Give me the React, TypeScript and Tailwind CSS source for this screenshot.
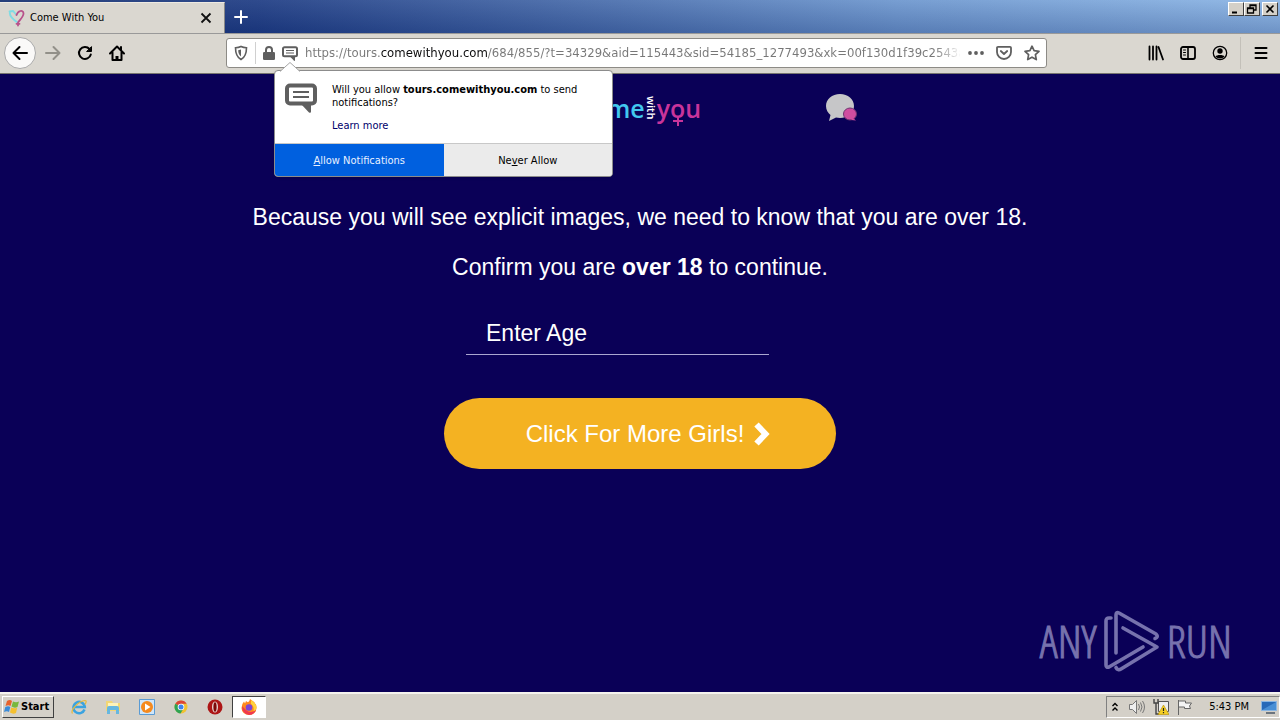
import React from "react";

const ui = "font-['DejaVu_Sans_Condensed','Noto_Sans',sans-serif]";

function NoticeIcon({ className }: { className: string }) {
  return (
    <svg viewBox="0 0 32 30" className={className} fill="none">
      <path d="M5 2.500h22a3 3 0 0 1 3 3v12a3 3 0 0 1-3 3H5a3 3 0 0 1-3-3v-12a3 3 0 0 1 3-3z" stroke="#5f5f5f" strokeWidth="4" strokeLinejoin="round" />
      <path d="M15.500 20.500 24 29.500q2 1 2-1v-8z" fill="#5f5f5f" />
      <path d="M8 9h16M8 14h16" stroke="#5f5f5f" strokeWidth="2.200" />
    </svg>
  );
}

function HeartIcon() {
  return (
    <svg viewBox="0 0 18 18" className="h-[18px] w-[18px]" fill="none" strokeLinecap="round" strokeWidth="1.800">
      <path d="M9.500 13.500C5 10.500 1 6 2 3M1.500 2.500 5 2l3.500 4" stroke="#7fdce4" />
      <path d="M8.500 6C10 1.500 15 .5 15.500 4c.5 3-2.500 5.500-5.500 9.500v3M8.500 14.800h3" stroke="#b8518b" />
    </svg>
  );
}

function WinButton({ label, children }: { label: string; children: React.ReactNode }) {
  return (
    <button aria-label={label} className="flex h-[14px] w-4 items-center justify-center border border-t-white border-l-white border-r-[#404040] border-b-[#404040] bg-[#d4d0c8]">
      <svg viewBox="0 0 12 10" className="h-[10px] w-3" fill="none" stroke="#000">{children}</svg>
    </button>
  );
}

function TitleBar() {
  return (
    <header className="flex h-[33px] bg-[linear-gradient(180deg,rgba(255,255,255,0.08),rgba(10,30,90,0.22)),linear-gradient(90deg,#15306f_0%,#1d3b83_20%,#6c96ce_70%,#8ab4e4_100%)]">
      <div className="flex h-[31px] w-[225px] items-center self-end border-t border-r border-t-[#eeeae2] border-r-[#888] bg-[#dad7d0] pr-2.5 pl-2">
        <HeartIcon />
        <span className="ml-1 flex-1 text-[11px] leading-4 text-black">Come With You</span>
        <button aria-label="Close tab" className="flex h-4 w-4 items-center justify-center">
          <svg viewBox="0 0 12 12" className="h-3 w-3" stroke="#111" strokeWidth="1.800"><path d="M1.500 1.500l9 9M10.500 1.500l-9 9" /></svg>
        </button>
      </div>
      <button aria-label="New tab" className="flex w-8 items-center justify-center">
        <svg viewBox="0 0 14 14" className="h-[14px] w-[14px]" stroke="#fff" strokeWidth="2" strokeLinecap="round"><path d="M7 1v12M1 7h12" /></svg>
      </button>
      <div className="ml-auto flex pt-0.5 pr-0.5">
        <WinButton label="Minimize"><path d="M2 8.500h5" strokeWidth="2" /></WinButton>
        <WinButton label="Restore"><path d="M4 3.500V1h6v5H8M4 1.500h6M1.500 4h6v5h-6zM1.500 4.500h6" strokeWidth="1.300" /></WinButton>
        <span className="w-0.5" />
        <WinButton label="Close"><path d="M2.500 1.500l7 7M9.500 1.500l-7 7" strokeWidth="1.600" /></WinButton>
      </div>
    </header>
  );
}

function Popup() {
  return (
    <section className="absolute top-[31px] left-[47px] z-10 w-[339px] rounded-[4px] border border-[#8c8c8c] bg-white text-[11px] leading-[13px] text-black shadow-sm">
      <svg viewBox="0 0 20 10" className="absolute -top-[9px] left-[5px] h-[10px] w-5"><path d="M0 9.500 10 .5l10 9" fill="#fff" stroke="#a5a5a5" /><path d="M1 9.800h18" stroke="#fff" strokeWidth="1.500" /></svg>
      <div className="flex h-[72px] gap-[15px] pt-3 pr-4 pl-2.5">
        <NoticeIcon className="h-[30px] w-8 shrink-0" />
        <div>
          <p>Will you allow <b>tours.comewithyou.com</b> to send notifications?</p>
          <a href="#learn" className="mt-2.5 block text-[#00006b]">Learn more</a>
        </div>
      </div>
      <div className="grid grid-cols-2 overflow-hidden rounded-b-[3px] border-t border-[#c8c8c8]">
        <button className="h-8 bg-[#0060df] text-[#e8f0ff]"><u>A</u>llow Notifications</button>
        <button className="h-8 bg-[#ebebeb]">Ne<u>v</u>er Allow</button>
      </div>
    </section>
  );
}

function ToolButton({ label, className, children }: { label: string; className?: string; children: React.ReactNode }) {
  return (
    <button aria-label={label} className={`flex h-8 w-8 shrink-0 items-center justify-center ${className ?? ""}`}>
      <svg viewBox="0 0 16 16" className="h-4 w-4" fill="none" stroke="currentColor" strokeWidth="2" strokeLinecap="round" strokeLinejoin="round">{children}</svg>
    </button>
  );
}

function NavBar() {
  return (
    <nav className="flex h-[41px] items-center border-t border-b border-t-[#999] border-b-[#77756f] bg-[#dad7d0] pb-px text-black">
      <div className="flex w-[226px] shrink-0 items-center pl-1">
        <ToolButton label="Back" className="rounded-full border border-[#aaa] bg-[#faf9f8]"><path d="M15 8H1.500M7.500 2 1.500 8l6 6" /></ToolButton>
        <ToolButton label="Forward" className="ml-px text-[#929089]"><path d="M1 8h13.500M8.500 2l6 6-6 6" /></ToolButton>
        <ToolButton label="Reload"><path d="M13.800 9.500A6 6 0 1 1 12.500 4" /><path d="M10 6.500h4.500V2z" fill="currentColor" strokeWidth="1" /></ToolButton>
        <ToolButton label="Home"><path d="M1 8.500 8 1.500l7 7M3.500 7.500V15h9V7.500" /><path d="M8 15v-4" strokeWidth="3" strokeLinecap="butt" /><path d="M12 2v3" /></ToolButton>
      </div>
      <div className="relative flex h-[30px] max-w-[821px] flex-1 items-center rounded-[3px] border border-[#8d8b86] bg-white pl-1.5 text-[#5f5f5f]">
        <svg viewBox="0 0 16 16" className="h-4 w-4" fill="none" stroke="currentColor" strokeWidth="1.600"><path d="M8 1.500c2 1 4 1.200 5.500 1.200C13.500 8 12.500 12 8 14.500 3.500 12 2.500 8 2.500 2.700 4 2.700 6 2.500 8 1.500z" /><path d="M8 4.500v7C6 10 5.300 8 5.200 5.300z" fill="currentColor" stroke="none" /></svg>
        <span className="mx-1.5 h-[22px] w-px bg-[#d0d0d0]" />
        <svg viewBox="0 0 14 16" className="h-4 w-[14px]" fill="#5f5f5f"><rect x="1" y="7" width="12" height="8" rx="1.300" /><path d="M4 8V5a3 3 0 0 1 6 0v3" fill="none" stroke="#5f5f5f" strokeWidth="2" /></svg>
        <NoticeIcon className="ml-1.5 h-[15px] w-4" />
        <input aria-label="Address" readOnly defaultValue="https://tours.comewithyou.com/684/855/?t=34329&aid=115443&sid=54185_1277493&xk=00f130d1f39c2543a8d6a1" className="ml-[7px] min-w-0 flex-1 bg-[linear-gradient(90deg,#777_75px,#0c0c0d_75px,#0c0c0d_182px,#777_182px,#777_630px,transparent_656px)] bg-clip-text text-[13px] leading-5 text-transparent outline-none" />
        <div className="ml-2 flex items-center gap-3 pr-1.5">
          <button aria-label="Page actions"><svg viewBox="0 0 16 16" className="h-4 w-4" fill="currentColor"><circle cx="2" cy="8" r="1.900" /><circle cx="8" cy="8" r="1.900" /><circle cx="14" cy="8" r="1.900" /></svg></button>
          <button aria-label="Save to Pocket"><svg viewBox="0 0 16 16" className="h-4 w-4" fill="none" stroke="currentColor" strokeWidth="1.800" strokeLinecap="round" strokeLinejoin="round"><path d="M2 1.800h12a1 1 0 0 1 1 1V7A7 7 0 0 1 1 7V2.800a1 1 0 0 1 1-1z" /><path d="M4.800 6 8 9l3.200-3" /></svg></button>
          <button aria-label="Bookmark"><svg viewBox="0 0 16 16" className="h-4 w-4" fill="none" stroke="currentColor" strokeWidth="1.700" strokeLinejoin="round"><path d="M8 1.200l2.100 4.500 4.900.6-3.600 3.400.9 4.900L8 12.200l-4.300 2.400.9-4.900L1 6.300l4.900-.6z" /></svg></button>
        </div>
        <Popup />
      </div>
      <div className="ml-auto flex items-center pr-[3px]">
        <ToolButton label="Library"><path d="M1.500 1.500v13M5 1.500v13M8.500 1.500v13M10.500 2l4.500 12.500" strokeWidth="1.800" /></ToolButton>
        <ToolButton label="Sidebars"><rect x="1" y="2" width="14" height="12" rx="2" strokeWidth="1.800" /><path d="M8 2v12" strokeWidth="1.600" /><path d="M3.500 5h2M3.500 7.500h2M3.500 10h2" strokeWidth="1" /></ToolButton>
        <ToolButton label="Account"><circle cx="8" cy="8" r="6.700" strokeWidth="1.300" /><circle cx="8" cy="6" r="2.700" fill="currentColor" stroke="none" /><path d="M3.500 11.500c1-2 8-2 9 0-2 2.600-7 2.600-9 0z" fill="currentColor" stroke="none" /></ToolButton>
        <span className="mx-1 h-8 w-px bg-[#c3c0b9]" />
        <ToolButton label="Menu"><path d="M2.500 3h11M2.500 8h11M2.500 13h11" /></ToolButton>
      </div>
    </nav>
  );
}

function Watermark() {
  return (
    <div className="absolute right-12 bottom-5 flex items-center gap-1.5 font-['Open_Sans_Condensed_Light','Open_Sans_Condensed','Roboto_Condensed',sans-serif] text-[45px] leading-[62px] font-light text-[#7772ad] [-webkit-text-stroke:1px_#7772ad]">
      <span>ANY</span>
      <svg viewBox="0 0 56 62" className="mx-px h-[62px] w-14" fill="none" stroke="currentColor" strokeWidth="3.600" strokeLinejoin="round" strokeLinecap="round">
        <path d="M12 43V5q0-3.500 3-2L52 24q3 3-1 4.500" />
        <path d="M7 8H5Q2 8 2 11v44q0 3 3 2L39 37" />
        <path d="M19 18 53 37 17 59q-3 2-5-1.500" />
      </svg>
      <span>RUN</span>
    </div>
  );
}

function Page() {
  return (
    <main className="relative flex-1 bg-[#0a0057] px-4 pt-3.5 font-['Liberation_Sans',Arial,sans-serif] text-white">
      <div className="mx-auto grid w-[434px] grid-cols-[1fr_auto_1fr] items-center">
        <span />
        <div className="flex h-10 items-center font-['Open_Sans','Noto_Sans',sans-serif] text-[25px] leading-8 font-semibold">
          <span className="text-[#42c8ef]">come</span>
          <span className="text-[11px] leading-3 [writing-mode:vertical-rl]">with</span>
          <span className="relative text-[#c9349b]">you
            <svg viewBox="0 0 10 10" className="absolute top-[24px] left-4 h-[10px] w-[10px]" stroke="#c9349b" strokeWidth="2"><path d="M5 0v10M0 5h10" /></svg>
          </span>
        </div>
        <button aria-label="Chat" className="justify-self-end">
          <svg viewBox="0 0 32 30" className="h-[30px] w-8"><path d="M15 1C7 1 1 6 1 13c0 4 2 7 4.500 9L4 28l7-3.500c1.300.3 2.500.5 4 .5 8 0 14-5 14-12S23 1 15 1z" fill="#c6c6c8" /><ellipse cx="25" cy="21" rx="6.500" ry="6" fill="#cf4da0" stroke="#6f3470" /><path d="m28 25 3 2.500-5-.5z" fill="#cf4da0" /></svg>
        </button>
      </div>
      <p className="mt-[75px] text-center text-[23px] leading-7">Because you will see explicit images, we need to know that you are over 18.</p>
      <p className="mt-[22px] text-center text-[23px] leading-7">Confirm you are <b>over 18</b> to continue.</p>
      <form className="mx-auto mt-8 flex w-[392px] flex-col">
        <input aria-label="Enter Age" placeholder="Enter Age" className="ml-[22px] h-[42px] w-[303px] border-b border-[#aaa6d0] bg-transparent px-5 text-[23px] text-white outline-none placeholder:text-white" />
        <button type="button" className="mt-[43px] flex h-[71px] items-center justify-center gap-2.5 rounded-full bg-[#f4b222] pl-4 text-2xl">
          Click For More Girls!
          <svg viewBox="0 0 16 24" className="h-6 w-4" fill="none" stroke="#fff" strokeWidth="6"><path d="m2.500 2.500 9 9.500-9 9.500" /></svg>
        </button>
      </form>
      <Watermark />
    </main>
  );
}

function TaskIcon({ label, className, children }: { label: string; className?: string; children: React.ReactNode }) {
  return (
    <button aria-label={label} className={`flex h-[22px] w-[34px] items-center justify-center ${className ?? ""}`}>
      <svg viewBox="0 0 16 16" className="h-4 w-4">{children}</svg>
    </button>
  );
}

function TaskBar() {
  return (
    <footer className="flex h-7 items-center border-t-2 border-[#f4f2ee] bg-[#d4d0c8] pl-0.5 text-black">
      <button className="flex h-[22px] w-[52px] items-center gap-px border border-t-white border-l-white border-r-[#404040] border-b-[#404040] pl-px text-[11px] font-bold">
        <svg viewBox="0 0 16 16" className="h-4 w-4 shrink-0"><path d="M3 2q3-2 5 0L6.500 7q-2-1.500-5 0z" fill="#e8622c" /><path d="M9 2.500q3 1.500 6 0L13.500 8q-3 1.500-6-.5z" fill="#79b83e" /><path d="M1.300 8q3-1.500 5 0L5 13q-2-1.500-5 0z" fill="#3b8bd8" /><path d="M7.200 8.500q3 1.500 6 .3L12 14q-3 1.500-6-.5z" fill="#f5c02f" /></svg>
        Start
      </button>
      <div className="ml-2 flex">
        <TaskIcon label="Internet Explorer"><path d="M13.500 10.500A5.700 5.700 0 1 1 13.800 8H4" fill="none" stroke="#3ba3e0" strokeWidth="2.500" /><path d="M1.500 14.500C-1 11 8 2 14 1.500c2 0 1 2.500 0 4" fill="none" stroke="#e7b93a" strokeWidth="1.200" /></TaskIcon>
        <TaskIcon label="Explorer"><path d="M1 2h6l1 2h7v8H1z" fill="#f2d675" /><path d="M3 4h10v4H3z" fill="#fff3b8" /><path d="M2 9q0-2 2-2h8q2 0 2 2v6h-3v-4H5v4H2z" fill="#67b7df" /></TaskIcon>
        <TaskIcon label="Media Player"><path d="M.5.5h15v15H.5z" fill="#cfe6fa" stroke="#5a9bd4" /><circle cx="8" cy="8" r="6" fill="#f58a1e" /><path d="M6 4.500 11.500 8 6 11.500z" fill="#fff" /></TaskIcon>
        <TaskIcon label="Chrome"><circle cx="8" cy="8" r="6.500" fill="#f1c232" /><path d="M8 8 2.300 4.800A6.500 6.500 0 0 1 13.700 4.800H8z" fill="#dc4437" /><path d="M2.300 4.800A6.500 6.500 0 0 0 7.500 14.500l3-5L8 8z" fill="#2fa353" /><circle cx="8" cy="8" r="3.300" fill="#fff" /><circle cx="8" cy="8" r="2.500" fill="#3f83ec" /></TaskIcon>
        <TaskIcon label="Opera"><circle cx="8" cy="8" r="7.500" fill="#ad1515" /><ellipse cx="8" cy="8" rx="3" ry="5.500" fill="#e8d6d2" /><ellipse cx="8" cy="8" rx="1.600" ry="4.800" fill="#7c0808" /></TaskIcon>
        <TaskIcon label="Firefox" className="w-8 border border-t-[#404040] border-l-[#404040] border-r-white border-b-white bg-white"><path d="M5 2Q8 5 9 0q7 4 6.500 9a7.500 7 0 0 1-15 0Q.5 5 3 2.500l1 2z" fill="#ff8a1e" /><path d="M10 1q6 4 5.500 8-1 3-3 4 1-6-2.500-8z" fill="#ffd23c" /><path d="M1 7q0 8 7 9 5 0 7-5-6 4-10 0z" fill="#f0384f" /><circle cx="8" cy="8.500" r="3.300" fill="#7a45d6" /></TaskIcon>
      </div>
      <div className="ml-auto flex h-[22px] items-center border border-t-[#808080] border-l-[#808080] border-r-white border-b-white pr-0.5 pl-1 text-[11px]">
        <svg viewBox="0 0 8 10" className="mr-2.5 h-[10px] w-2" fill="none" stroke="#000" strokeWidth="1.400"><path d="m1.500 4 2.500-2.500L6.500 4M1.500 8.500 4 6l2.500 2.500" /></svg>
        <svg viewBox="0 0 16 16" className="mr-2 h-4 w-4" fill="#eee" stroke="#777"><path d="M.5 5.500h3l4-4v13l-4-4h-3z" /><path d="M9.500 5q2 3 0 6M11.500 3.500q3 4.500 0 9M13.500 2q4 6 0 12" fill="none" /></svg>
        <svg viewBox="0 0 16 16" className="mr-2 h-4 w-4"><path d="M5.500 2.500h10v10h-10z" fill="#eee" stroke="#555" /><path d="M1 0v4h4V0M3 4v11h3" fill="none" stroke="#444" strokeWidth="1.400" /><path d="M10.500 6 16 15.500H5z" fill="#f5cf23" stroke="#b58d00" strokeWidth=".6" /><path d="M10.500 9v3M10.500 13v1.200" stroke="#222" strokeWidth="1.200" /></svg>
        <svg viewBox="0 0 16 16" className="mr-4 h-4 w-4" fill="#f4f4f4" stroke="#666"><path d="M1.500 1v15" /><path d="M1.500 2h7v2h6l-2 3 1 2.500h-6V8h-6z" /></svg>
        <time className="mr-3">5:43 PM</time>
        <svg viewBox="0 0 16 14" className="h-[14px] w-4"><path d="M.5 1.500h15v9H.5z" fill="#2769b8" stroke="#8ab6e2" /><path d="m1 10 14-8v8z" fill="#498fd5" /><path d="M5 13h9" stroke="#345" strokeWidth="1.300" /></svg>
      </div>
    </footer>
  );
}

export default function App() {
  return (
    <div className={`flex min-h-screen flex-col ${ui}`}>
      <TitleBar />
      <NavBar />
      <Page />
      <TaskBar />
    </div>
  );
}
